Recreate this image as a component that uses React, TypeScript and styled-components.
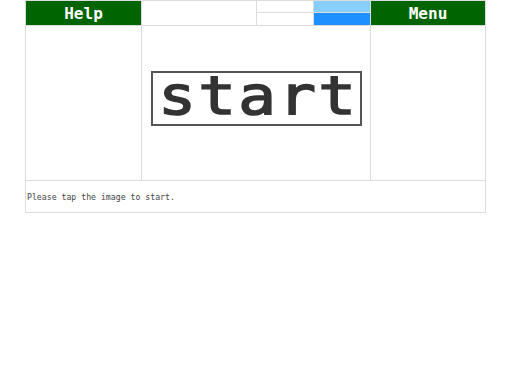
import React from "react";
import styled, { createGlobalStyle } from "styled-components";

const GlobalStyle = createGlobalStyle`
    html, body {
        margin: 0;
        padding: 0;
        background: #fff;
    }
`;

const Board = styled.div`
    width: 459px;
    margin: 0 0 0 25px;
    display: grid;
    grid-template-columns: 115px 228px 114px;
    grid-template-rows: 24px 154px 31px;
    gap: 1px;
    padding: 1px;
    background: #dcdcdc;
    font-family: "DejaVu Sans Mono", monospace;
`;

const Cell = styled.div`
    background: #fff;
`;

const MenuButton = styled.div`
    background: #006400;
    color: #fff;
    font-weight: bold;
    font-size: 16px;
    display: flex;
    align-items: center;
    justify-content: center;
`;

const Gauges = styled.div`
    display: grid;
    grid-template-columns: 114px 56px 56px;
    gap: 1px;
`;

const Stack = styled.div`
    display: grid;
    grid-template-rows: 11px 12px;
    gap: 1px;
`;

const Slot = styled.div<{ $fill?: string }>`
    background: ${(p) => p.$fill || "#fff"};
`;

const Stage = styled.div`
    background: #fff;
    display: flex;
    justify-content: center;
    align-items: flex-start;
    padding-top: 45px;
    padding-left: 1px;
`;

const StartImage = styled.div`
    box-sizing: border-box;
    width: 211px;
    height: 55px;
    border: 2px solid #555;
    display: flex;
    align-items: center;
    justify-content: center;
    color: #333;
    cursor: pointer;
`;

const StartLabel = styled.span`
    display: inline-block;
    font-family: "DejaVu Sans Mono", monospace;
    font-size: 54px;
    letter-spacing: 2px;
    line-height: 1;
    -webkit-text-stroke: 1.6px #333;
    transform: scaleX(1.16);
    margin-top: -5px;
    margin-left: 3px;
`;

const Message = styled.div`
    grid-column: 1 / 4;
    background: #fff;
    font-size: 8.2px;
    color: #444;
    display: flex;
    align-items: center;
    padding-left: 1px;
`;

function App() {
    return (
        <>
            <GlobalStyle />
            <Board>
                <MenuButton>Help</MenuButton>
                <Gauges>
                    <Slot />
                    <Stack>
                        <Slot />
                        <Slot />
                    </Stack>
                    <Stack>
                        <Slot $fill="#87cefa" />
                        <Slot $fill="#1e90ff" />
                    </Stack>
                </Gauges>
                <MenuButton>Menu</MenuButton>
                <Cell />
                <Stage>
                    <StartImage>
                        <StartLabel>start</StartLabel>
                    </StartImage>
                </Stage>
                <Cell />
                <Message>Please tap the image to start.</Message>
            </Board>
        </>
    );
}

export default App;
